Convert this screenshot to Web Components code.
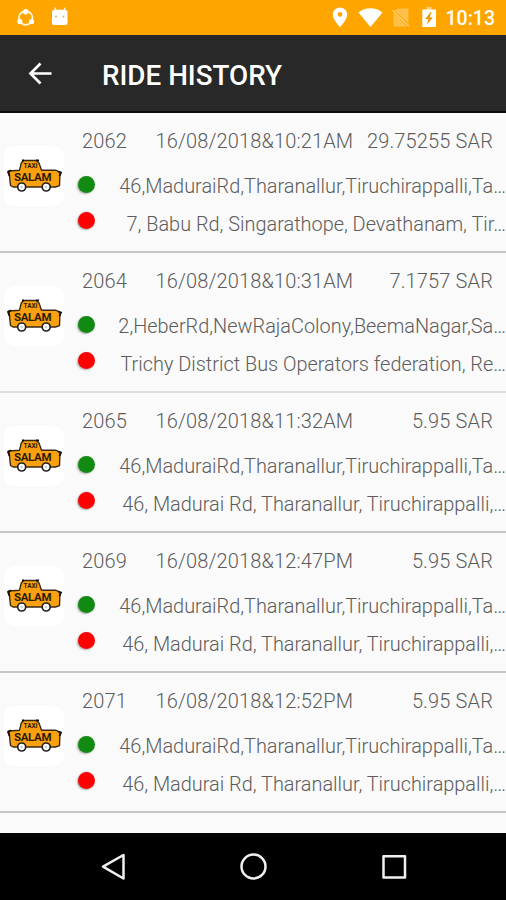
<!DOCTYPE html>
<html lang="en">
<head>
<meta charset="UTF-8">
<title>Ride History</title>
<style>
  body {
    margin: 0;
    background-color: #fafafa;
    font-family: Roboto, sans-serif;
  }
</style>
</head>
<body>
<ride-screen>
  <status-bar slot="top" time="10:13"></status-bar>
  <app-header slot="top">RIDE HISTORY</app-header>
  <ride-item>
    <span slot="id">2062</span>
    <span slot="date">16/08/2018&amp;10:21AM</span>
    <span slot="price">29.75255 SAR</span>
    <span slot="from">46,MaduraiRd,Tharanallur,Tiruchirappalli,Ta…</span>
    <span slot="to">7, Babu Rd, Singarathope, Devathanam, Tir…</span>
  </ride-item>
  <ride-item class="soft">
    <span slot="id">2064</span>
    <span slot="date">16/08/2018&amp;10:31AM</span>
    <span slot="price">7.1757 SAR</span>
    <span slot="from">2,HeberRd,NewRajaColony,BeemaNagar,Sa…</span>
    <span slot="to">Trichy District Bus Operators federation, Re…</span>
  </ride-item>
  <ride-item>
    <span slot="id">2065</span>
    <span slot="date">16/08/2018&amp;11:32AM</span>
    <span slot="price">5.95 SAR</span>
    <span slot="from">46,MaduraiRd,Tharanallur,Tiruchirappalli,Ta…</span>
    <span slot="to">46, Madurai Rd, Tharanallur, Tiruchirappalli,…</span>
  </ride-item>
  <ride-item>
    <span slot="id">2069</span>
    <span slot="date">16/08/2018&amp;12:47PM</span>
    <span slot="price">5.95 SAR</span>
    <span slot="from">46,MaduraiRd,Tharanallur,Tiruchirappalli,Ta…</span>
    <span slot="to">46, Madurai Rd, Tharanallur, Tiruchirappalli,…</span>
  </ride-item>
  <ride-item>
    <span slot="id">2071</span>
    <span slot="date">16/08/2018&amp;12:52PM</span>
    <span slot="price">5.95 SAR</span>
    <span slot="from">46,MaduraiRd,Tharanallur,Tiruchirappalli,Ta…</span>
    <span slot="to">46, Madurai Rd, Tharanallur, Tiruchirappalli,…</span>
  </ride-item>
  <nav-bar slot="bottom"></nav-bar>
</ride-screen>

<script>
class RideScreen extends HTMLElement {
  constructor() {
    super();
    this.attachShadow({ mode: "open" });
    this.shadowRoot.innerHTML = `
      <style>
        :host {
          display: flex;
          flex-direction: column;
          height: 900px;
          overflow: hidden;
        }
        main {
          flex: 1;
          min-height: 0;
        }
      </style>
      <slot name="top"></slot>
      <main><slot></slot></main>
      <slot name="bottom"></slot>
    `;
  }
}

class StatusBar extends HTMLElement {
  constructor() {
    super();
    this.attachShadow({ mode: "open" });
  }

  connectedCallback() {
    this.shadowRoot.innerHTML = `
      <style>
        :host {
          display: flex;
          align-items: center;
          justify-content: space-between;
          height: 35px;
          flex: none;
          padding: 0 11px 0 16px;
          box-sizing: border-box;
          background-color: #ffa500;
          color: #fff;
        }
        div {
          display: flex;
          align-items: center;
        }
        svg { display: block; }
        .time {
          font-size: 19.5px;
          font-weight: 500;
          line-height: 35px;
          padding-top: 1px;
          height: 34px;
          margin-left: 8px;
        }
      </style>
      <div>
        <svg width="54" height="35" viewBox="16 0 54 35">
          <circle cx="25.7" cy="18" r="6.8" fill="none" stroke="#fff4dc" stroke-width="1.7"/>
          <g fill="#fff">
            <circle cx="25.7" cy="11.8" r="2.7"/>
            <circle cx="19.8" cy="21.5" r="2.6"/>
            <circle cx="31.6" cy="21.5" r="2.6"/>
          </g>
          <path d="M54.5 7.5l1.8 3M65.5 7.5l-1.8 3" stroke="#fff" stroke-width="1.3"/>
          <rect x="52" y="9.8" width="15.5" height="15.2" rx="2.6" fill="#fff"/>
          <circle cx="56" cy="16.6" r="1" fill="#f0b040"/>
          <circle cx="63.5" cy="16.6" r="1" fill="#f0b040"/>
        </svg>
      </div>
      <div>
        <svg width="106" height="35" viewBox="332 0 106 35">
          <path fill="#fff" fill-rule="evenodd" d="M340 7.5a7.2 7.2 0 0 0-7.2 7.2c0 5 7.2 12.3 7.2 12.3s7.2-7.3 7.2-12.3A7.2 7.2 0 0 0 340 7.5zm0 4.5a2.4 2.4 0 1 1 0 4.8 2.4 2.4 0 0 1 0-4.8z"/>
          <path fill="#fff" d="M358.5 12.5C365 6.7 376 6.7 382.5 12.5L370.5 27z"/>
          <path fill="#ffc04a" d="M398 8.5h10.5V23L394.5 10.5z"/>
          <path fill="#ffc04a" d="M393.5 12.5L407 26.5H393.5z"/>
          <path d="M392.5 10.3l16.5 16" stroke="#ffcd70" stroke-width="1.5"/>
          <path fill="#ffd17a" d="M426.5 7h5v3h-5z"/>
          <path fill="#fff" d="M422.3 9.5h13.7V27h-13.7z"/>
          <path fill="#ef9900" d="M430.6 12l-5.4 7h3.1l-1.1 5.5 5.7-7.3h-3.2l1.8-5.2z"/>
        </svg>
        <span class="time">${this.getAttribute("time")}</span>
      </div>
    `;
  }
}

class AppHeader extends HTMLElement {
  constructor() {
    super();
    this.attachShadow({ mode: "open" });
    this.shadowRoot.innerHTML = `
      <style>
        :host {
          display: flex;
          align-items: center;
          height: 78px;
          flex: none;
          padding-left: 28px;
          box-sizing: border-box;
          background-color: #282828;
          border-bottom: 2px solid #0c0c0c;
          color: #fff;
        }
        svg { display: block; }
        h1 {
          margin: 5px 0 0 50px;
          font-size: 27.8px;
          line-height: 32px;
          font-weight: 500;
        }
      </style>
      <svg width="24" height="24" viewBox="0 0 24 24">
        <path d="M23.5 12.5H2.5M12.5 2.5L2.5 12.5l10 10" fill="none" stroke="#fff" stroke-width="2.7"/>
      </svg>
      <h1><slot></slot></h1>
    `;
  }
}

class TaxiLogo extends HTMLElement {
  constructor() {
    super();
    this.attachShadow({ mode: "open" });
    this.shadowRoot.innerHTML = `
      <style>
        :host {
          display: block;
          width: 60px;
          height: 60px;
          border-radius: 10px;
          background-color: #fff;
        }
        svg { display: block; }
        text {
          font-family: Roboto, sans-serif;
          font-weight: 700;
          fill: #2d1c05;
        }
      </style>
      <svg width="60" height="60" viewBox="4 146 60 60">
        <path d="M9 171l10.5-.8 1.8-7.2 2.2-2.5h13l2.5 2.5 2.5 7.2h14l4.5 2-.5 13.5-4 1.3H13l-2.5-1.5z"
          fill="#fba00f" stroke="#3a2c14" stroke-width="1.4" stroke-linejoin="round"/>
        <path d="M9.5 176l-1.5-4 3-1.8M59.5 176l1.5-3.5-3-1M22 160.5h2M36 160.5h3"
          fill="none" stroke="#111" stroke-width="1.8"/>
        <text x="23.5" y="168.2" font-size="7" textLength="14" lengthAdjust="spacingAndGlyphs">TAXI</text>
        <text x="14" y="180.8" font-size="11.5" textLength="37.5">SALAM</text>
        <g fill="#fff" stroke="#222" stroke-width="1.7">
          <circle cx="21.7" cy="187" r="4"/>
          <circle cx="46.2" cy="187" r="4"/>
        </g>
        <g fill="#ccc">
          <circle cx="21.7" cy="187" r="1.2"/>
          <circle cx="46.2" cy="187" r="1.2"/>
        </g>
      </svg>
    `;
  }
}

class RideItem extends HTMLElement {
  constructor() {
    super();
    this.attachShadow({ mode: "open" });
    this.shadowRoot.innerHTML = `
      <style>
        :host {
          display: grid;
          grid-template-columns: 60px 1fr;
          column-gap: 12px;
          height: 140px;
          padding-left: 4px;
          box-sizing: border-box;
          border-bottom: 2px solid #c6c6c6;
          font-size: 20px;
          font-weight: 300;
          line-height: 24px;
          color: #5c5c5c;
          white-space: nowrap;
        }
        :host(.soft) { border-bottom: 2px solid #dedede; }
        taxi-logo { margin-top: 33px; }
        .top {
          display: flex;
          margin-top: 16px;
          padding: 0 13px 0 6px;
          letter-spacing: 0.14px;
        }
        .date { margin-left: 28.5px; }
        .price { margin-left: auto; }
        .place {
          display: flex;
          align-items: center;
          justify-content: space-between;
          font-size: 19.9px;
        }
        .from { margin-top: 22px; }
        .to { margin-top: 14px; }
        .dot {
          width: 17px;
          height: 17px;
          margin: -5px 0 0 1.5px;
          border-radius: 50%;
          background-color: #108a10;
          box-shadow: -1px 1px 2px rgba(0, 0, 0, 0.35);
        }
        .to .dot {
          background-color: #fe0000;
          margin-top: -10px;
        }
      </style>
      <taxi-logo></taxi-logo>
      <div>
        <div class="top">
          <slot name="id"></slot>
          <div class="date"><slot name="date"></slot></div>
          <div class="price"><slot name="price"></slot></div>
        </div>
        <div class="place from"><div class="dot"></div><slot name="from"></slot></div>
        <div class="place to"><div class="dot"></div><slot name="to"></slot></div>
      </div>
    `;
  }
}

class NavBar extends HTMLElement {
  constructor() {
    super();
    this.attachShadow({ mode: "open" });
    this.shadowRoot.innerHTML = `
      <style>
        :host {
          display: block;
          height: 67px;
          flex: none;
          background-color: #000;
        }
        svg { display: block; }
      </style>
      <svg width="506" height="67" viewBox="0 833 506 67" fill="none" stroke="#f0f0f0" stroke-width="2.5" stroke-linejoin="round">
        <path d="M103 866.7L123.5 855v23.5z"/>
        <circle cx="253.5" cy="866.5" r="12"/>
        <rect x="383.5" y="856.2" width="21.5" height="21.2"/>
      </svg>
    `;
  }
}

customElements.define("ride-screen", RideScreen);
customElements.define("status-bar", StatusBar);
customElements.define("app-header", AppHeader);
customElements.define("taxi-logo", TaxiLogo);
customElements.define("ride-item", RideItem);
customElements.define("nav-bar", NavBar);
</script>
</body>
</html>
